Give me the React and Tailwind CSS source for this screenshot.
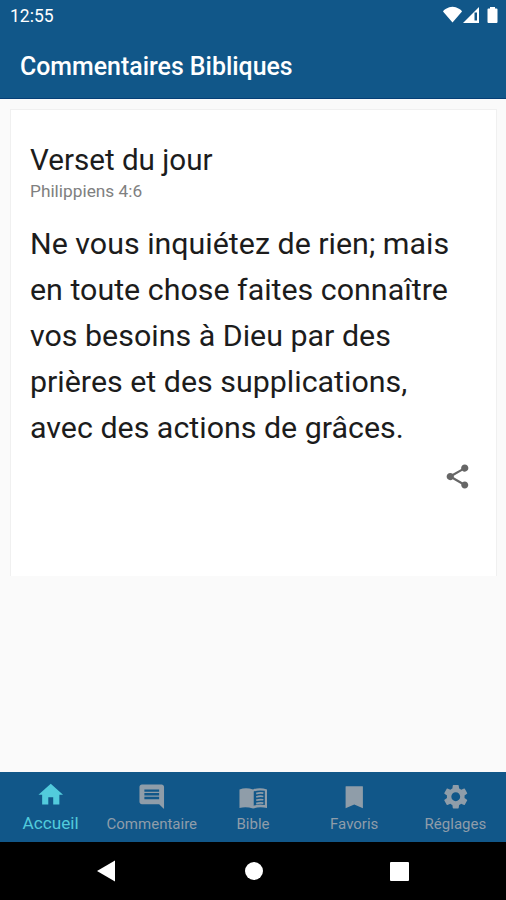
import React from "react";
import { MdHome, MdInsertComment, MdSettings, MdShare } from "react-icons/md";

function BookIcon({ className }) {
  return (
    <svg className={className} viewBox="0 0 30 30" fill="currentColor">
      <path
        fillRule="evenodd"
        d="M1.500 7.500Q8 5 15.300 7.500Q22 5 29.500 7.500V26.500Q22 24.500 15.300 27Q8 24.500 1.500 26.500ZM16 9.700V24.200Q21 22.200 27.300 23.500V9Q21 7.800 16 9.700Z"
      />
      <path
        d="M18.500 11.800Q22 10.600 25.800 11.300M18.500 15.200Q22 14 25.800 14.700M18.500 18.600Q22 17.400 25.800 18.100M18.500 22Q22 20.800 25.800 21.500"
        fill="none"
        stroke="currentColor"
        strokeWidth="1.7"
      />
    </svg>
  );
}

function BookmarkIcon({ className }) {
  return (
    <svg className={className} viewBox="0 0 30 30" fill="currentColor">
      <path d="M6.700 4.700Q6.700 4.200 7.200 4.200H23.800Q24.300 4.200 24.300 4.700V26.700L15.500 23L6.700 26.700Z" />
    </svg>
  );
}

const tabs = [
  { label: "Commentaire", Icon: MdInsertComment },
  { label: "Bible", Icon: BookIcon },
  { label: "Favoris", Icon: BookmarkIcon },
  { label: "Réglages", Icon: MdSettings },
];

function StatusBar() {
  return (
    <div className="flex h-8 items-center justify-between pl-[10px] pr-2 text-white">
      <span className="text-[17.5px] leading-8">12:55</span>
      <svg className="h-8 w-[58px]" viewBox="440 0 58 32" fill="currentColor">
        <path d="M443 11.500Q443.500 10 446 8.700Q452.500 5 459 8.700Q461.500 10 462 11.500L452.500 22.500Z" />
        <path fillRule="evenodd" d="M479 7V23H463ZM477 12.500H474.500V20.500H477Z" />
        <path d="M490 7h5v1.500h1.500q1 0 1 1V22q0 1-1 1h-8q-1 0-1-1V9.500q0-1 1-1H490Z" />
      </svg>
    </div>
  );
}

export default function App() {
  return (
    <div className="flex h-[900px] w-[506px] flex-col overflow-hidden bg-[#fafafa] font-[Roboto,sans-serif]">
      <header className="h-[99px] shrink-0 border-b border-[#063f76] bg-[#115789]">
        <StatusBar />
        <h1 className="pl-5 pt-px text-[24.9px] font-medium leading-[67px] text-white">
          <span className="whitespace-nowrap">Commentaires Bibliques</span>
        </h1>
      </header>
      <main className="flex-1 pl-[10px] pr-[9px] pt-[10px]">
        <section className="h-[467px] border-x border-t border-[#f0f0f0] bg-white px-[19px] pt-8">
          <h2 className="whitespace-nowrap text-[29.6px] leading-9 text-[#1c1c1c]">Verset du jour</h2>
          <p className="mt-px text-[17.3px] leading-6 text-[#808080]">Philippiens 4:6</p>
          <p className="mt-[18px] whitespace-nowrap text-[30.4px] leading-[46px] text-[#1c1c1c]">
            Ne vous inquiétez de rien; mais<br />
            en toute chose faites connaître<br />
            vos besoins à Dieu par des<br />
            prières et des supplications,<br />
            avec des actions de grâces.
          </p>
          <div className="flex justify-end pr-[5px] pt-[11px]">
            <MdShare className="size-[29px] text-[#666666]" />
          </div>
        </section>
      </main>
      <nav className="grid h-[70px] shrink-0 grid-cols-5 bg-[#115789] text-[#8f9da9]">
        <div className="flex flex-col items-center pt-2 text-[#52cbdc]">
          <MdHome className="size-[29.5px]" />
          <span className="mt-[3px] text-[17.2px] leading-5">Accueil</span>
        </div>
        {tabs.map(({ label, Icon }) => (
          <div key={label} className="flex flex-col items-center pt-[10px]">
            <Icon className="size-[29.5px]" />
            <span className="mt-[3px] text-[15px] leading-[18px]">{label}</span>
          </div>
        ))}
      </nav>
      <div className="flex h-[58px] shrink-0 items-center justify-between bg-black pl-[97px] pr-[97px] text-white">
        <svg className="h-6 w-5" viewBox="0 0 20 24" fill="currentColor">
          <path d="M0 12L18 1.500V22.500Z" />
        </svg>
        <div className="size-[18px] rounded-full bg-white" />
        <div className="size-[19px] rounded-[1px] bg-white" />
      </div>
    </div>
  );
}
